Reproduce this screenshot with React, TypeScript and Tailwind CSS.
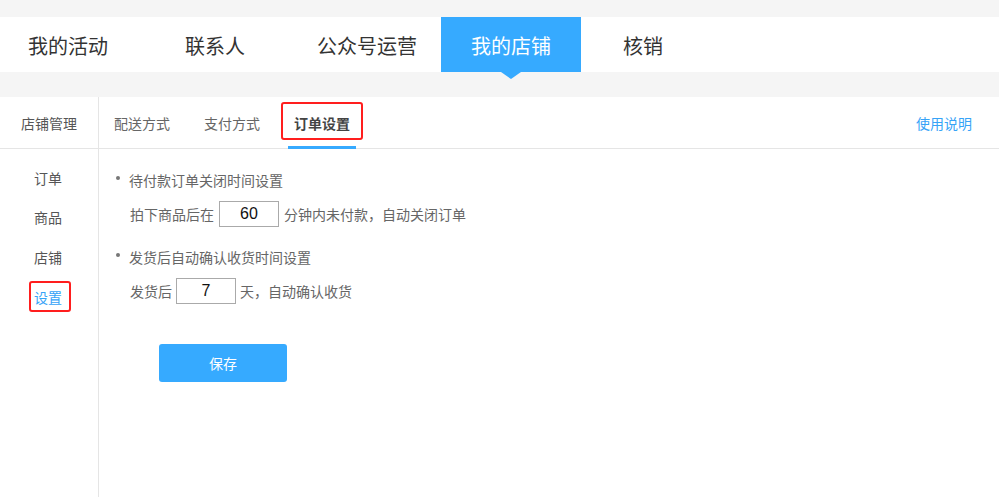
import React from "react";

const font = { fontFamily: '"Noto Sans CJK SC", "Liberation Sans", sans-serif' };

export default function App() {
  return (
    <div
      className="w-[999px] h-[497px] bg-[#f5f5f5] overflow-hidden flex flex-col"
      style={font}
    >
      {/* top nav */}
      <div className="mt-[17px] h-[55px] bg-white flex items-stretch text-[20px] text-[#333] leading-none shrink-0">
        <div className="ml-[28px] flex items-center pt-[3px]">我的活动</div>
        <div className="ml-[77px] flex items-center pt-[3px]">联系人</div>
        <div className="ml-[72px] flex items-center pt-[3px]">公众号运营</div>
        <div className="ml-[24px] w-[140px] relative bg-[#36aaff] text-white flex items-center justify-center pt-[3px]">
          我的店铺
          <div className="absolute left-1/2 -translate-x-1/2 top-full w-0 h-0 border-l-[10px] border-r-[10px] border-t-[7px] border-l-transparent border-r-transparent border-t-[#36aaff]" />
        </div>
        <div className="ml-[42px] flex items-center pt-[3px]">核销</div>
      </div>

      {/* panel */}
      <div className="mt-[25px] flex-1 bg-white flex flex-col">
        {/* sub nav */}
        <div className="h-[52px] border-b border-[#e5e5e5] flex text-[14px] leading-none shrink-0">
          <div className="w-[99px] border-r border-[#e5e5e5] flex items-center justify-center text-[#555] pt-[1px]">
            店铺管理
          </div>
          <div className="flex-1 flex items-stretch pl-[9px] gap-[22px] text-[#666]">
            <div className="px-[6px] flex items-center pt-[1px]">配送方式</div>
            <div className="px-[6px] flex items-center pt-[1px]">支付方式</div>
            <div className="px-[6px] flex items-center pt-[1px] relative text-[#444] font-bold">
              订单设置
              <div className="absolute left-0 right-0 bottom-[-1px] h-[3px] bg-[#36aaff]" />
              <div className="absolute left-[-7px] right-[-7px] top-[5px] h-[38px] border-2 border-[#ff1e1e] rounded-[3px]" />
            </div>
            <div className="ml-auto pr-[27px] flex items-center pt-[1px] text-[#36a3f7]">使用说明</div>
          </div>
        </div>

        {/* body */}
        <div className="flex-1 flex">
          <div className="w-[99px] border-r border-[#e5e5e5] pt-[9px] pl-[34px] text-[14px] text-[#555]">
            <div className="h-[40px] flex items-center">订单</div>
            <div className="h-[39px] flex items-center">商品</div>
            <div className="h-[40px] flex items-center">店铺</div>
            <div className="h-[40px] flex items-center relative text-[#36a3f7]">
              设置
              <div className="absolute left-[-5px] top-[4px] w-[42px] h-[31px] border-2 border-[#ff1e1e] rounded-[3px]" />
            </div>
          </div>

          <div className="flex-1 pt-[21px] pl-[17px] text-[14px] text-[#666]">
            <div className="h-[20px] flex items-center">
              <span className="w-[4px] h-[4px] rounded-full bg-[#777] mr-[9px] mb-[4px]" />
              待付款订单关闭时间设置
            </div>
            <div className="mt-[11px] h-[26px] flex items-center pl-[14px]">
              <span>拍下商品后在</span>
              <div
                className="ml-[5px] mr-[5px] w-[60px] h-[26px] border border-[#aaa] flex items-center justify-center text-[16px] text-[#111]"
                style={{ fontFamily: '"Liberation Sans", sans-serif' }}
              >
                60
              </div>
              <span>分钟内未付款，自动关闭订单</span>
            </div>

            <div className="mt-[20px] h-[20px] flex items-center">
              <span className="w-[4px] h-[4px] rounded-full bg-[#777] mr-[9px] mb-[4px]" />
              发货后自动确认收货时间设置
            </div>
            <div className="mt-[11px] h-[26px] flex items-center pl-[14px]">
              <span>发货后</span>
              <div
                className="ml-[4px] mr-[4px] w-[60px] h-[26px] border border-[#aaa] flex items-center justify-center text-[16px] text-[#111]"
                style={{ fontFamily: '"Liberation Sans", sans-serif' }}
              >
                7
              </div>
              <span>天，自动确认收货</span>
            </div>

            <button className="mt-[40px] ml-[43px] w-[128px] h-[38px] rounded-[3px] bg-[#36aaff] text-white text-[14px] flex items-center justify-center">
              保存
            </button>
          </div>
        </div>
      </div>
    </div>
  );
}
